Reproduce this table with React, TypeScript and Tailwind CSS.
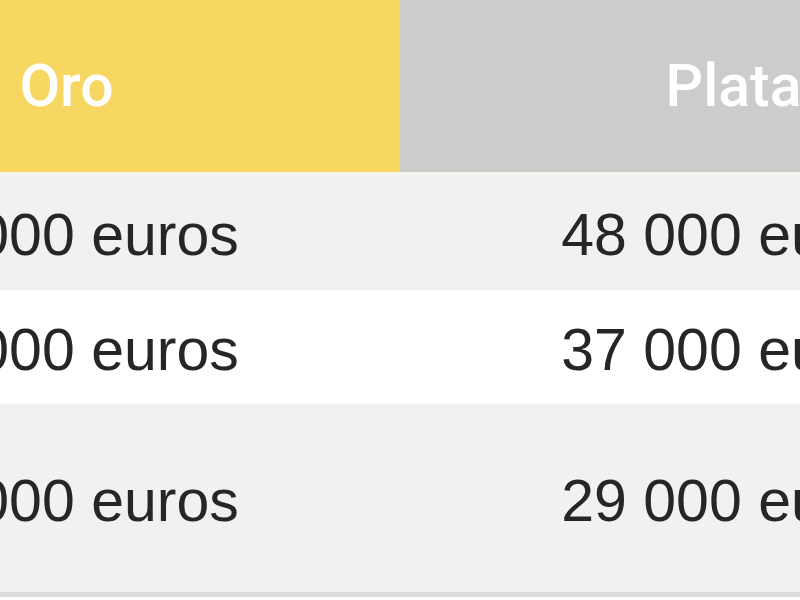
const rows = [
  { oro: "64 000 euros", plata: "48 000 euros", h: "h-[117px]", bg: "bg-[#f1f1f1]" },
  { oro: "49 000 euros", plata: "37 000 euros", h: "h-[114px]", bg: "bg-white" },
  { oro: "39 000 euros", plata: "29 000 euros", h: "h-[188px]", bg: "bg-[#f1f1f1]" },
];

export default function App() {
  return (
    <div className="w-[800px] h-[600px] overflow-hidden bg-white">
      <table className="table-fixed border-collapse w-[1334px] ml-[-267px]">
        <thead>
          <tr className="h-[173px] border-b-[3px] border-[#f6f4ec]">
            <th className="w-[667px] bg-[#f5d761] text-white text-[59px] font-medium text-center font-['Roboto',sans-serif]">
              Oro
            </th>
            <th className="w-[667px] bg-[#cccccc] text-white text-[59px] font-medium text-center font-['Roboto',sans-serif]">
              Plata
            </th>
          </tr>
        </thead>
        <tbody className="font-['Liberation_Sans',Arial,sans-serif] text-[59px] text-[#262626]">
          {rows.map((row) => (
            <tr key={row.plata} className={`${row.h} ${row.bg}`}>
              <td className="text-center align-middle pt-[6px]">{row.oro}</td>
              <td className="text-center align-middle pt-[6px]">{row.plata}</td>
            </tr>
          ))}
        </tbody>
      </table>
      <div className="h-[5px] bg-[#dcdcdc]" />
    </div>
  );
}
